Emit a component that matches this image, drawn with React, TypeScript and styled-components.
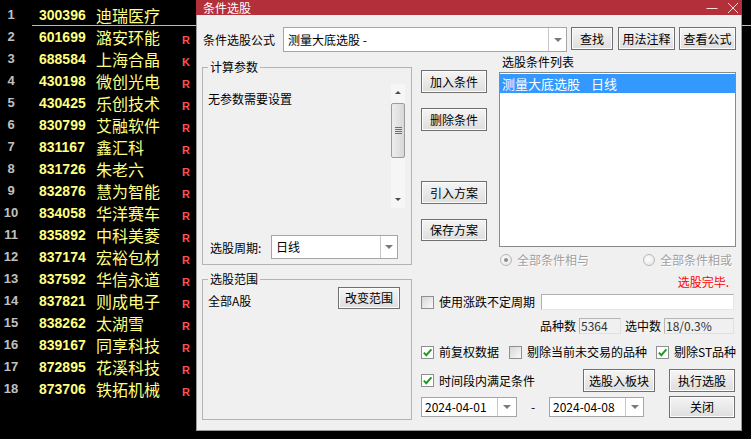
import React from "react";
import styled, { createGlobalStyle } from "styled-components";

const Global = createGlobalStyle`
  html, body { margin: 0; padding: 0; background: #000; }
  body { font-family: "Noto Sans CJK SC", "Noto Sans", sans-serif; }
  * { box-sizing: border-box; }
`;

const CJK = `"Noto Sans CJK SC", "Noto Sans", sans-serif`;

const Screen = styled.div`
  position: relative;
  width: 751px;
  height: 439px;
  overflow: hidden;
  background: #000;
`;

/* ---------- stock list ---------- */
const StockList = styled.div`
  display: flex;
  flex-direction: column;
  padding-top: 4px;
`;

const StockRow = styled.div<{ $selected?: boolean }>`
  position: relative;
  display: grid;
  grid-template-columns: 39px 57px 86px 1fr;
  align-items: center;
  height: 22px;
  &::after {
    content: "";
    display: ${(p) => (p.$selected ? "block" : "none")};
    position: absolute;
    left: 32px;
    right: 0;
    bottom: 0;
    height: 1px;
    background: #c8c850;
  }
`;

const RowNum = styled.span`
  width: 22px;
  text-align: center;
  font: bold 13px/22px "Liberation Sans", sans-serif;
  color: #c0c0c0;
`;

const RowCode = styled.span`
  font: bold 14px/22px "Liberation Sans", sans-serif;
  color: #ffff80;
`;

const RowName = styled.span`
  font: 16px/22px ${CJK};
  color: #ffff80;
`;

const RowFlag = styled.span`
  font: bold 11px/12px "Liberation Sans", sans-serif;
  color: #ff5050;
  padding-top: 6px;
`;

/* ---------- dialog ---------- */
const Dialog = styled.div`
  position: absolute;
  left: 196px;
  top: 0;
  width: 546px;
  height: 431px;
  background: #f0f0f0;
  border: 1px solid #9a9a9a;
  border-top: none;
  display: flex;
  flex-direction: column;
  font: 12px/14px ${CJK};
  color: #000;
`;

const TitleBar = styled.div`
  height: 15px;
  margin: 0 -1px;
  padding: 0 3px 0 7px;
  background: #b3303a;
  display: flex;
  align-items: center;
  color: #fff;
  font: 12px/15px ${CJK};
`;

const WindowControls = styled.div`
  margin-left: auto;
  display: flex;
  align-items: center;
  gap: 9px;
`;

const Body = styled.div`
  flex: 1;
  padding: 12px 0 0 5px;
  display: flex;
  flex-direction: column;
`;

const TopRow = styled.div`
  display: flex;
  align-items: flex-start;
  height: 25px;
`;

const FieldLabel = styled.span<{ $w: number; $pl?: number }>`
  width: ${(p) => p.$w}px;
  padding-left: ${(p) => p.$pl ?? 1}px;
  line-height: 25px;
  flex-shrink: 0;
  white-space: nowrap;
`;

const Button = styled.button<{ $w: number; $h?: number; $mt?: number; $ml?: number; $mr?: number }>`
  width: ${(p) => p.$w}px;
  height: ${(p) => p.$h ?? 23}px;
  margin: ${(p) => p.$mt ?? 0}px ${(p) => p.$mr ?? 0}px 0 ${(p) => p.$ml ?? 0}px;
  padding: 0;
  flex-shrink: 0;
  border: 1px solid #707070;
  border-radius: 0;
  background: linear-gradient(#f5f5f5, #e8e8e8 55%, #dedede);
  box-shadow: inset 0 0 0 1px #fcfcfc;
  font: 12px/1 ${CJK};
  color: #000;
  white-space: nowrap;
`;

const Combo = styled.div<{ $w: number; $h: number }>`
  width: ${(p) => p.$w}px;
  height: ${(p) => p.$h}px;
  flex-shrink: 0;
  display: flex;
  background: #fff;
  border: 1px solid #a5a5a5;
`;

const ComboText = styled.span<{ $pl?: number }>`
  flex: 1;
  display: flex;
  align-items: center;
  padding-left: ${(p) => p.$pl ?? 3}px;
  white-space: nowrap;
  font-size: 12px;
`;

const ComboArrow = styled.span<{ $w: number }>`
  width: ${(p) => p.$w}px;
  border-left: 1px solid #c8c8c8;
  display: flex;
  align-items: center;
  justify-content: center;
  background: #fff;
`;

const Caret = styled.span`
  width: 0;
  height: 0;
  border-left: 4px solid transparent;
  border-right: 4px solid transparent;
  border-top: 4px solid #7a7a7a;
`;

const Main = styled.div`
  margin-top: 3px;
  display: grid;
  grid-template-columns: 210px 315px;
  column-gap: 9px;
`;

const LeftCol = styled.div`
  display: flex;
  flex-direction: column;
`;

const GroupBox = styled.fieldset<{ $h: number; $mt: number }>`
  margin: ${(p) => p.$mt}px 0 0 0;
  padding: 0;
  height: ${(p) => p.$h}px;
  min-width: 0;
  border: 1px solid #b4b4b4;
  display: flex;
  flex-direction: column;
`;

const Legend = styled.legend`
  margin-left: 5px;
  padding: 0 2px;
  font: 12px/14px ${CJK};
`;

const ParamArea = styled.div`
  margin: 10px 0 0 3px;
  width: 199px;
  height: 124px;
  display: flex;
`;

const ParamText = styled.div`
  flex: 1;
  padding: 8px 0 0 2px;
`;

const ScrollBar = styled.div`
  width: 14px;
  display: flex;
  flex-direction: column;
  background: #f6f6f6;
`;

const ScrollArrow = styled.span<{ $up?: boolean }>`
  height: 17px;
  display: flex;
  align-items: center;
  justify-content: center;
  &::before {
    content: "";
    border-left: 3px solid transparent;
    border-right: 3px solid transparent;
    ${(p) => (p.$up ? "border-bottom: 3px solid #4a4a4a;" : "border-top: 3px solid #4a4a4a;")}
  }
`;

const ScrollThumb = styled.span`
  margin: 2px 0 0 0;
  height: 55px;
  border: 1px solid #9c9c9c;
  border-radius: 2px;
  background: linear-gradient(to right, #ededed, #d8d8d8);
  display: flex;
  flex-direction: column;
  align-items: center;
  justify-content: center;
  gap: 1px;
`;

const Grip = styled.span`
  width: 7px;
  height: 1px;
  background: #707070;
`;

const ScrollSpacer = styled.span`
  flex: 1;
`;

const PeriodRow = styled.div`
  margin-top: 27px;
  height: 24px;
  display: flex;
  align-items: center;
`;

const ScopeRow = styled.div`
  margin-top: 1px;
  padding: 0 11px 0 5px;
  display: flex;
  justify-content: space-between;
  align-items: flex-start;
`;

const ScopeText = styled.span`
  padding-top: 7px;
`;

const RightCol = styled.div`
  display: flex;
  flex-direction: column;
`;

const TopPart = styled.div`
  display: flex;
  align-items: flex-start;
`;

const ButtonCol = styled.div`
  width: 66px;
  display: flex;
  flex-direction: column;
`;

const ListSection = styled.div`
  width: 237px;
  margin-left: 12px;
  display: flex;
  flex-direction: column;
`;

const ListLabel = styled.span`
  padding-left: 3px;
`;

const ListBox = styled.div`
  margin-top: 3px;
  height: 175px;
  background: #fff;
  border: 1px solid #8a8a8a;
  padding-top: 1px;
`;

const ListItem = styled.div<{ $active?: boolean }>`
  height: 19px;
  padding-left: 2px;
  display: flex;
  align-items: center;
  font-size: 13px;
  background: ${(p) => (p.$active ? "#3399ff" : "transparent")};
  color: ${(p) => (p.$active ? "#fff" : "#000")};
`;

const Gap = styled.span<{ $w: number }>`
  display: inline-block;
  width: ${(p) => p.$w}px;
`;

const RadioRow = styled.div`
  margin-top: 5px;
  height: 16px;
  padding: 0 4px 0 1px;
  display: flex;
  align-items: center;
  justify-content: space-between;
`;

const RadioItem = styled.span`
  display: flex;
  align-items: center;
  gap: 5px;
  color: #a0a0a0;
  text-shadow: 1px 1px 0 #fff;
`;

const RadioDot = styled.span<{ $on?: boolean }>`
  width: 12px;
  height: 12px;
  border-radius: 50%;
  border: 1px solid #b8b8b8;
  background: radial-gradient(circle at 40% 40%, #fdfdfd, #e2e2e2);
  display: flex;
  align-items: center;
  justify-content: center;
  &::after {
    content: "";
    display: ${(p) => (p.$on ? "block" : "none")};
    width: 4px;
    height: 4px;
    border-radius: 50%;
    background: #8c8c8c;
  }
`;

const Status = styled.div`
  margin-top: 7px;
  padding-right: 7px;
  text-align: right;
  color: #ff0000;
`;

const FormRow = styled.div<{ $mt: number; $h: number; $end?: boolean }>`
  margin-top: ${(p) => p.$mt}px;
  height: ${(p) => p.$h}px;
  display: flex;
  align-items: center;
  justify-content: ${(p) => (p.$end ? "flex-end" : "flex-start")};
`;

const CheckItem = styled.label<{ $ml?: number }>`
  margin-left: ${(p) => p.$ml ?? 0}px;
  display: flex;
  align-items: center;
  gap: 5px;
  white-space: nowrap;
  flex-shrink: 0;
`;

const CheckBox = styled.span<{ $on?: boolean }>`
  width: 13px;
  height: 13px;
  border: 1px solid #8e8f8f;
  background: ${(p) => (p.$on ? "#fff" : "linear-gradient(135deg, #d6d6d6, #fafafa)")};
  display: flex;
  align-items: center;
  justify-content: center;
`;

const TextInput = styled.div`
  margin: 0 2px 0 6px;
  flex: 1;
  height: 16px;
  background: #fff;
  border: 1px solid #b0b0b0;
  border-right-color: #e6e6e6;
  border-bottom-color: #e6e6e6;
`;

const ReadBox = styled.span<{ $w: number; $ml: number }>`
  width: ${(p) => p.$w}px;
  margin-left: ${(p) => p.$ml}px;
  height: 16px;
  padding-left: 1px;
  border: 1px solid #b5b5b5;
  border-right-color: #e0e0e0;
  border-bottom-color: #e0e0e0;
  background: #f0f0f0;
  color: #333;
  display: flex;
  align-items: center;
`;

const InlineText = styled.span<{ $ml?: number }>`
  margin-left: ${(p) => p.$ml ?? 0}px;
  white-space: nowrap;
`;

const RightGroup = styled.div`
  margin-left: auto;
  display: flex;
  align-items: center;
`;

const Dash = styled.span`
  width: 32px;
  text-align: center;
`;

const Check = () => (
  <svg width="11" height="11" viewBox="0 0 11 11">
    <path d="M1.8 5.6 L4.3 8.2 L9.4 2.4" fill="none" stroke="#1f9a1f" strokeWidth="2" />
  </svg>
);

const stocks: [string, string, string][] = [
  ["300396", "迪瑞医疗", ""],
  ["601699", "潞安环能", "R"],
  ["688584", "上海合晶", "K"],
  ["430198", "微创光电", "R"],
  ["430425", "乐创技术", "R"],
  ["830799", "艾融软件", "R"],
  ["831167", "鑫汇科", "R"],
  ["831726", "朱老六", "R"],
  ["832876", "慧为智能", "R"],
  ["834058", "华洋赛车", "R"],
  ["835892", "中科美菱", "R"],
  ["837174", "宏裕包材", "R"],
  ["837592", "华信永道", "R"],
  ["837821", "则成电子", "R"],
  ["838262", "太湖雪", "R"],
  ["839167", "同享科技", "R"],
  ["872895", "花溪科技", "R"],
  ["873706", "铁拓机械", "R"],
];

export default function App() {
  return (
    <Screen>
      <Global />
      <StockList>
        {stocks.map(([code, name, flag], i) => (
          <StockRow key={code} $selected={i === 0}>
            <RowNum>{i + 1}</RowNum>
            <RowCode>{code}</RowCode>
            <RowName>{name}</RowName>
            <RowFlag>{flag}</RowFlag>
          </StockRow>
        ))}
      </StockList>

      <Dialog>
        <TitleBar>
          条件选股
          <WindowControls>
            <svg width="12" height="12" viewBox="0 0 12 12">
              <path d="M0.5 6.5 H11.5" stroke="#f3dede" strokeWidth="1" />
            </svg>
            <svg width="12" height="12" viewBox="0 0 12 12">
              <path d="M1 1 L11 11 M11 1 L1 11" stroke="#f3dede" strokeWidth="1" />
            </svg>
          </WindowControls>
        </TitleBar>
        <Body>
          <TopRow>
            <FieldLabel $w={81}>条件选股公式</FieldLabel>
            <Combo $w={284} $h={25}>
              <ComboText $pl={4}>测量大底选股 -</ComboText>
              <ComboArrow $w={18}>
                <Caret />
              </ComboArrow>
            </Combo>
            <Button $w={42} $ml={4}>查找</Button>
            <Button $w={57} $ml={5}>用法注释</Button>
            <Button $w={57} $ml={4}>查看公式</Button>
          </TopRow>

          <Main>
            <LeftCol>
              <GroupBox $mt={5} $h={205}>
                <Legend>计算参数</Legend>
                <ParamArea>
                  <ParamText>无参数需要设置</ParamText>
                  <ScrollBar>
                    <ScrollArrow $up />
                    <ScrollThumb>
                      <Grip />
                      <Grip />
                      <Grip />
                      <Grip />
                    </ScrollThumb>
                    <ScrollSpacer />
                    <ScrollArrow />
                  </ScrollBar>
                </ParamArea>
                <PeriodRow>
                  <FieldLabel $w={68} $pl={7}>选股周期:</FieldLabel>
                  <Combo $w={127} $h={24}>
                    <ComboText $pl={4}>日线</ComboText>
                    <ComboArrow $w={17}>
                      <Caret />
                    </ComboArrow>
                  </Combo>
                </PeriodRow>
              </GroupBox>
              <GroupBox $mt={7} $h={148}>
                <Legend>选股范围</Legend>
                <ScopeRow>
                  <ScopeText>全部A股</ScopeText>
                  <Button $w={62} $h={22}>改变范围</Button>
                </ScopeRow>
              </GroupBox>
            </LeftCol>

            <RightCol>
              <TopPart>
                <ButtonCol>
                  <Button $w={66} $mt={15}>加入条件</Button>
                  <Button $w={66} $mt={15}>删除条件</Button>
                  <Button $w={66} $mt={50}>引入方案</Button>
                  <Button $w={66} $h={22} $mt={15}>保存方案</Button>
                </ButtonCol>
                <ListSection>
                  <ListLabel>选股条件列表</ListLabel>
                  <ListBox>
                    <ListItem $active>
                      测量大底选股<Gap $w={11} />日线
                    </ListItem>
                  </ListBox>
                  <RadioRow>
                    <RadioItem>
                      <RadioDot $on />
                      全部条件相与
                    </RadioItem>
                    <RadioItem>
                      <RadioDot />
                      全部条件相或
                    </RadioItem>
                  </RadioRow>
                </ListSection>
              </TopPart>

              <Status>选股完毕.</Status>

              <FormRow $mt={3} $h={20}>
                <CheckItem>
                  <CheckBox />
                  使用涨跌不定周期
                </CheckItem>
                <TextInput />
              </FormRow>

              <FormRow $mt={6} $h={16} $end>
                <InlineText>品种数</InlineText>
                <ReadBox $w={42} $ml={3}>5364</ReadBox>
                <InlineText $ml={4}>选中数</InlineText>
                <ReadBox $w={70} $ml={3}>18/0.3%</ReadBox>
                <Gap $w={2} />
              </FormRow>

              <FormRow $mt={8} $h={20}>
                <CheckItem>
                  <CheckBox $on>
                    <Check />
                  </CheckBox>
                  前复权数据
                </CheckItem>
                <CheckItem $ml={10}>
                  <CheckBox />
                  剔除当前未交易的品种
                </CheckItem>
                <CheckItem $ml={9}>
                  <CheckBox $on>
                    <Check />
                  </CheckBox>
                  剔除ST品种
                </CheckItem>
              </FormRow>

              <FormRow $mt={7} $h={23}>
                <CheckItem>
                  <CheckBox $on>
                    <Check />
                  </CheckBox>
                  时间段内满足条件
                </CheckItem>
                <RightGroup>
                  <Button $w={72}>选股入板块</Button>
                  <Button $w={66} $ml={14} $mr={1}>执行选股</Button>
                </RightGroup>
              </FormRow>

              <FormRow $mt={4} $h={22}>
                <Combo $w={96} $h={20}>
                  <ComboText $pl={3}>2024-04-01</ComboText>
                  <ComboArrow $w={19}>
                    <Caret />
                  </ComboArrow>
                </Combo>
                <Dash>-</Dash>
                <Combo $w={95} $h={20}>
                  <ComboText $pl={3}>2024-04-08</ComboText>
                  <ComboArrow $w={18}>
                    <Caret />
                  </ComboArrow>
                </Combo>
                <RightGroup>
                  <Button $w={66} $h={22} $mr={1}>关闭</Button>
                </RightGroup>
              </FormRow>
            </RightCol>
          </Main>
        </Body>
      </Dialog>
    </Screen>
  );
}
